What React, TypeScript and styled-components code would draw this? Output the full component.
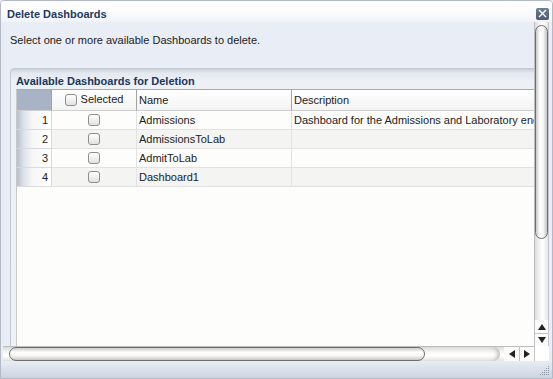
import React from 'react';
import styled, { createGlobalStyle } from 'styled-components';

const GlobalStyle = createGlobalStyle`
  * { box-sizing: border-box; }
  html, body { margin: 0; padding: 0; background: #e9edf5; }
  body { font-family: "Liberation Sans", Arial, sans-serif; font-size: 11px; color: #222; }
`;

const Window = styled.div`
  width: 553px;
  height: 379px;
  display: flex;
  flex-direction: column;
  border: 1px solid #b3bac6;
  border-radius: 4px 4px 0 0;
  background: #e9edf5;
  overflow: hidden;
`;

const TitleBar = styled.div`
  height: 21px;
  display: flex;
  align-items: center;
  justify-content: space-between;
  padding: 4px 3px 0 6px;
  background: linear-gradient(#ffffff 0, #fbfbfc 60%, #eff2f7 100%);
`;

const Title = styled.div`
  font-weight: bold;
  font-size: 11px;
  color: #1b3b60;
`;

const CloseButton = styled.div`
  width: 13px;
  height: 12px;
  border-radius: 2px;
  background: linear-gradient(#6d7c90, #4c5b70);
  display: flex;
  align-items: center;
  justify-content: center;
`;

const Viewport = styled.div`
  flex: 1;
  display: grid;
  grid-template-columns: 1fr 15px;
  grid-template-rows: 1fr 15px;
  padding: 0 3px 0 2px;
  min-height: 0;
`;

const Content = styled.div`
  overflow: hidden;
  min-height: 0;
`;

const Instruction = styled.div`
  padding: 12px 0 0 7px;
  height: 46px;
  color: #222;
`;

const Panel = styled.div`
  margin-left: 7px;
  width: 720px;
  height: 320px;
  border: 1px solid #c3c9d3;
  border-radius: 4px 0 0 0;
  background: linear-gradient(#c9cfd9 0, #e4e8ef 4px, #edf0f5 12px, #eef1f6 100%);
`;

const PanelTitle = styled.div`
  height: 20px;
  padding: 6px 0 0 5px;
  font-weight: bold;
  color: #17375c;
`;

const PanelBody = styled.div`
  margin-left: 5px;
  height: 300px;
  background: #fdfdfb;
  border-left: 1px solid #c8c8c8;
  border-top: 1px solid #a9a9a9;
`;

const Table = styled.div`
  display: grid;
  grid-template-columns: 35px 85px 155px 440px;
`;

const HeadCell = styled.div<{ $corner?: boolean; $center?: boolean }>`
  height: 21px;
  display: flex;
  align-items: center;
  justify-content: ${(p) => (p.$center ? 'center' : 'flex-start')};
  gap: 4px;
  padding: 0 2px;
  border-right: 1px solid #a2a2a2;
  border-bottom: 1px solid #cfcfcf;
  background: ${(p) => (p.$corner ? '#a8b3c6' : 'linear-gradient(#ffffff, #f3f3f3)')};
`;

const SelectedLabel = styled.span`
  margin-top: -3px;
`;

const RowHead = styled.div`
  height: 19px;
  display: flex;
  align-items: center;
  justify-content: flex-end;
  padding-right: 3px;
  border-bottom: 1px solid #dadada;
  border-right: 1px solid #dadada;
  background: linear-gradient(to right, #b6bfcd 0, #dfe3ea 7px, #f7f7f7 16px, #ffffff 100%);
`;

const Cell = styled.div<{ $alt?: boolean; $center?: boolean }>`
  height: 19px;
  display: flex;
  align-items: center;
  justify-content: ${(p) => (p.$center ? 'center' : 'flex-start')};
  padding: 0 2px;
  white-space: nowrap;
  overflow: hidden;
  border-bottom: 1px solid #e2e2e2;
  border-right: 1px solid #e2e2e2;
  background: ${(p) => (p.$alt ? '#f4f4f3' : '#fdfdfb')};
`;

const Check = styled.span`
  display: inline-block;
  width: 12px;
  height: 12px;
  border: 1px solid #8d8d8d;
  border-radius: 3px;
  background: linear-gradient(#ffffff, #e2e2e2);
`;

const VScroll = styled.div`
  display: flex;
  flex-direction: column;
  padding-top: 2px;
  background: linear-gradient(to right, #dcdcdc, #f7f7f7 40%, #ffffff 60%, #e6e6e6);
  border-left: 1px solid #bdbdbd;
  border-right: 1px solid #c7c7c7;
`;

const VThumb = styled.div`
  height: 214px;
  margin: 1px 0 0 0;
  border: 1px solid #6e6e6e;
  border-radius: 7px;
  background: linear-gradient(to right, #c9c9c9, #ffffff 35%, #f6f6f6 65%, #c4c4c4);
`;

const Spacer = styled.div`
  flex: 1;
`;

const ArrowBtn = styled.div<{ $bordered?: boolean }>`
  width: 13px;
  height: 13px;
  display: flex;
  align-items: center;
  justify-content: center;
  background: #fbfbfb;
  border-top: ${(p) => (p.$bordered ? '1px solid #c4c4c4' : 'none')};
`;

const HScroll = styled.div`
  display: flex;
  align-items: stretch;
  border-top: 1px solid #bdbdbd;
  background: linear-gradient(#dedede, #f8f8f8 40%, #ffffff 60%, #e4e4e4);
`;

const HTrack = styled.div`
  flex: 1;
  display: flex;
  padding-left: 6px;
  border-radius: 0 7px 7px 0;
  margin-right: 4px;
  box-shadow: inset -4px 0 4px -2px #b8b8b8;
`;

const HThumb = styled.div`
  width: 416px;
  border: 1px solid #6e6e6e;
  border-radius: 7px;
  background: linear-gradient(#cacaca, #ffffff 35%, #f6f6f6 65%, #c6c6c6);
`;

const HArrow = styled.div<{ $sep?: boolean }>`
  width: 15px;
  display: flex;
  align-items: center;
  justify-content: center;
  background: #fbfbfb;
  border-left: ${(p) => (p.$sep ? '1px solid #c4c4c4' : 'none')};
`;

const Corner = styled.div`
  background: #ffffff;
  border-left: 1px solid #c7c7c7;
`;

const StatusBar = styled.div`
  height: 17px;
  display: flex;
  justify-content: flex-end;
  align-items: flex-end;
  padding: 0 2px 2px 0;
  background: linear-gradient(#e8ecf3, #cbd5e3);
`;

const rows = [
  { name: 'Admissions', description: 'Dashboard for the Admissions and Laboratory endpoints overview' },
  { name: 'AdmissionsToLab', description: '' },
  { name: 'AdmitToLab', description: '' },
  { name: 'Dashboard1', description: '' },
];

function Triangle({ dir }: { dir: 'up' | 'down' | 'left' | 'right' }) {
  const pts = {
    up: '0,7 4,1 8,7',
    down: '0,1 8,1 4,7',
    left: '7,0 7,8 1,4',
    right: '1,0 1,8 7,4',
  }[dir];
  return (
    <svg width="8" height="8" viewBox="0 0 8 8">
      <polygon points={pts} fill="#222" />
    </svg>
  );
}

export default function App() {
  return (
    <>
      <GlobalStyle />
      <Window>
        <TitleBar>
          <Title>Delete Dashboards</Title>
          <CloseButton>
            <svg width="9" height="9" viewBox="0 0 9 9">
              <path d="M1 1 L8 8 M8 1 L1 8" stroke="#fff" strokeWidth="1.4" />
            </svg>
          </CloseButton>
        </TitleBar>
        <Viewport>
          <Content>
            <Instruction>Select one or more available Dashboards to delete.</Instruction>
            <Panel>
              <PanelTitle>Available Dashboards for Deletion</PanelTitle>
              <PanelBody>
                <Table>
                  <HeadCell $corner />
                  <HeadCell $center>
                    <Check />
                    <SelectedLabel>Selected</SelectedLabel>
                  </HeadCell>
                  <HeadCell>Name</HeadCell>
                  <HeadCell>Description</HeadCell>
                  {rows.map((r, i) => (
                    <React.Fragment key={r.name}>
                      <RowHead>{i + 1}</RowHead>
                      <Cell $alt={i % 2 === 1} $center>
                        <Check />
                      </Cell>
                      <Cell $alt={i % 2 === 1}>{r.name}</Cell>
                      <Cell $alt={i % 2 === 1}>{r.description}</Cell>
                    </React.Fragment>
                  ))}
                </Table>
              </PanelBody>
            </Panel>
          </Content>
          <VScroll>
            <VThumb />
            <Spacer />
            <ArrowBtn>
              <Triangle dir="up" />
            </ArrowBtn>
            <ArrowBtn $bordered>
              <Triangle dir="down" />
            </ArrowBtn>
          </VScroll>
          <HScroll>
            <HTrack>
              <HThumb />
            </HTrack>
            <HArrow>
              <Triangle dir="left" />
            </HArrow>
            <HArrow $sep>
              <Triangle dir="right" />
            </HArrow>
          </HScroll>
          <Corner />
        </Viewport>
        <StatusBar>
          <svg width="10" height="10" viewBox="0 0 10 10">
            {[
              [8, 0], [6, 2], [8, 2], [4, 4], [6, 4], [8, 4],
              [2, 6], [4, 6], [6, 6], [8, 6], [0, 8], [2, 8], [4, 8], [6, 8], [8, 8],
            ].map(([x, y]) => (
              <rect key={`${x}-${y}`} x={x} y={y} width="1" height="1" fill="#8a95a6" />
            ))}
          </svg>
        </StatusBar>
      </Window>
    </>
  );
}
